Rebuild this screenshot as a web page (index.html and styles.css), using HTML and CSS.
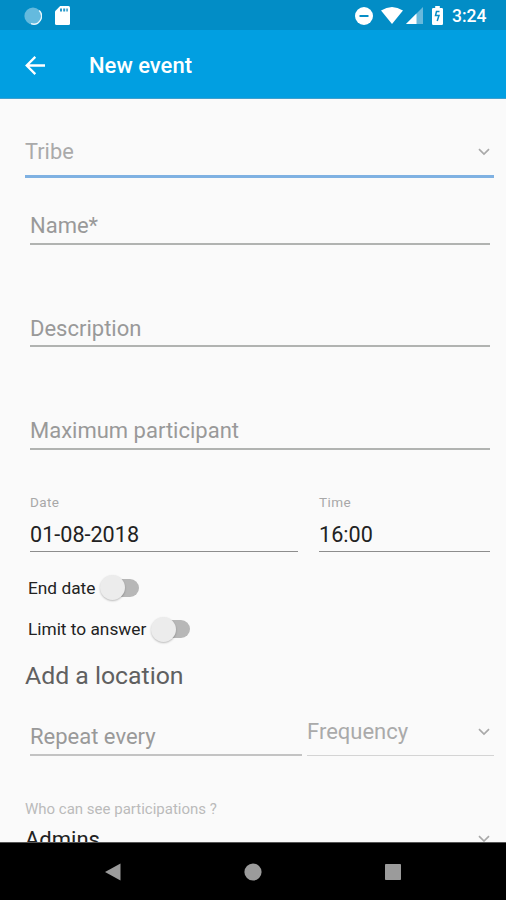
FILE: index.html
```html
<!DOCTYPE html>
<html lang="en">
<head>
<meta charset="utf-8">
<title>New event</title>
<link rel="stylesheet" href="styles.css">
</head>
<body>
<div class="screen">
  <div class="status">
    <svg class="sync" width="18" height="18" viewBox="0 0 18 18"><circle cx="9" cy="9" r="8.6" fill="#64bade"/><path d="M15.200 3.500A8 8 0 0 1 7 16.700" fill="none" stroke="#e9f7fc" stroke-width="1.300"/></svg>
    <svg class="sd" width="15" height="19" viewBox="0 0 15 19"><path d="M5.200 0H13.500Q15 0 15 1.500V17.500Q15 19 13.500 19H1.500Q0 19 0 17.500V5.200Z" fill="#fff"/><path d="M5 2.500H7V5.500H5ZM8.200 2.500H10.200V5.500H8.200ZM11.300 2.500H12.800V5.500H11.300Z" fill="#2698ca"/></svg>
    <span class="spacer"></span>
    <svg class="dnd" width="18" height="18" viewBox="0 0 18 18"><circle cx="9" cy="9" r="9" fill="#fff"/><path d="M4.500 9H13.500" stroke="#078dc6" stroke-width="2"/></svg>
    <svg class="wifi" width="22" height="17" viewBox="0 0 22 17"><path d="M0 3.500Q11 -3.500 22 3.500L11 17Z" fill="#fff"/></svg>
    <svg class="cell" width="17" height="17" viewBox="0 0 17 17"><path d="M0 17L17 0V17Z" fill="#68b9dc"/><path d="M0 17L10.500 6.500V17Z" fill="#fff"/></svg>
    <svg class="battery" width="11" height="19" viewBox="0 0 11 19"><path d="M3.200 0H7.800V2H9.800Q11 2 11 3.200V17.800Q11 19 9.800 19H1.200Q0 19 0 17.800V3.200Q0 2 1.200 2H3.200Z" fill="#fff"/><path d="M7.500 5.500H4.500L3.500 9.500H7L5.200 15" fill="none" stroke="#078dc6" stroke-width="1.500"/></svg>
    <span class="clock">3:24</span>
  </div>
  <div class="appbar">
    <svg width="20" height="20" viewBox="0 0 20 20"><path d="M10.300 .9L1.700 9.500L10.300 18.100M1.700 9.500H20" fill="none" stroke="#fff" stroke-width="2.300"/></svg>
    <h1 class="title">New event</h1>
  </div>
  <div class="form">
    <div class="select tribe"><span class="tribe-text">Tribe</span><svg class="chev" width="12" height="8" viewBox="0 0 12 8"><path d="M1 1.200L6 6L11 1.200" fill="none" stroke="#a9a9a9" stroke-width="1.700"/></svg></div>
    <div class="input name"><span class="name-text">Name*</span></div>
    <div class="input description"><span class="description-text">Description</span></div>
    <div class="input maximum"><span class="maximum-text">Maximum participant</span></div>
    <div class="when">
      <div class="date"><div class="label">Date</div><div class="value"><span class="date-text">01-08-2018</span></div></div>
      <div class="time"><div class="label">Time</div><div class="value"><span class="time-text">16:00</span></div></div>
    </div>
    <div class="toggle"><span class="end-text">End date</span><span class="switch"><span class="thumb"></span></span></div>
    <div class="toggle"><span class="limit-text">Limit to answer</span><span class="switch"><span class="thumb"></span></span></div>
    <div class="location"><span class="location-text">Add a location</span></div>
    <div class="repeat">
      <div class="every"><span class="every-text">Repeat every</span></div>
      <div class="select frequency"><span class="frequency-text">Frequency</span><svg class="chev" width="12" height="8" viewBox="0 0 12 8"><path d="M1 1.200L6 6L11 1.200" fill="none" stroke="#a9a9a9" stroke-width="1.700"/></svg></div>
    </div>
    <div class="who"><span class="who-text">Who can see participations ?</span></div>
    <div class="admins"><span class="admins-text">Admins</span><svg class="chev" width="12" height="8" viewBox="0 0 12 8"><path d="M1 1.200L6 6L11 1.200" fill="none" stroke="#a9a9a9" stroke-width="1.700"/></svg></div>
  </div>
  <div class="nav">
    <svg width="16" height="18" viewBox="0 0 16 18"><path d="M0 9L15.500 .5V17.500Z" fill="#9b9b9b"/></svg>
    <svg class="home" width="18" height="18" viewBox="0 0 18 18"><circle cx="9" cy="9" r="8.600" fill="#9b9b9b"/></svg>
    <svg class="recent" width="16" height="16" viewBox="0 0 16 16"><rect width="16" height="16" rx=".8" fill="#9b9b9b"/></svg>
  </div>
</div>
</body>
</html>
```
FILE: styles.css
```css
* { box-sizing: border-box; }
body { margin: 0; font-family: Roboto, sans-serif; background: #fafafa; }
svg { display: block; flex: none; }
.screen { width: 506px; height: 900px; display: flex; flex-direction: column; overflow: hidden; }
.status { height: 30px; flex: none; display: flex; align-items: center; padding: 1px 17px 0 24px; background: #028dc6; }
.sd { margin-left: 13px; }
.spacer { flex: 1; }
.wifi { margin-left: 8px; }
.cell { margin-left: 3px; }
.battery { margin-left: 9px; }
.clock { width: 37px; margin-left: 9px; font-size: 17.5px; font-weight: 500; line-height: 22px; color: #fff; white-space: nowrap; }
.appbar { height: 69px; flex: none; display: flex; align-items: center; padding: 3px 25px 0; background: #019fe1; border-bottom: 1px solid #3f9fcd; }
.title { margin: 0 0 0 44px; font-size: 22px; line-height: 26px; font-weight: 500; color: #fff; }
.form { flex: 1; min-height: 0; overflow: hidden; padding: 0 12px 0 25px; font-size: 22px; line-height: 26px; color: #999; white-space: nowrap; }
.select { display: flex; justify-content: space-between; align-items: flex-end; color: #aaa; padding-right: 4px; }
.chev { margin-bottom: 9px; }
.tribe { height: 79px; padding-bottom: 10px; border-bottom: 3px solid #7fb1e2; }
.tribe-text { font-size: 21.8px; }
.input { margin: 0 4px 0 5px; display: flex; align-items: flex-end; padding-bottom: 4px; border-bottom: 2px solid #b1b3b1; }
.name { height: 67px; }
.description { height: 102px; padding-bottom: 3px; }
.maximum { height: 103px; }
.when { display: flex; gap: 21px; padding: 0 4px 0 5px; }
.date { width: 268px; }
.time { flex: 1; }
.label { padding-top: 43px; font-size: 13.5px; line-height: 18px; color: #a8a8a8; letter-spacing: .4px; }
.value { height: 41px; display: flex; align-items: flex-end; padding-bottom: 3px; border-bottom: 1px solid #8d8d8d; font-size: 21.6px; color: #222; }
.toggle { height: 42px; display: flex; align-items: center; gap: 5px; padding-left: 3px; font-size: 17.3px; color: #222; }
.when + .toggle { height: 41px; margin-top: 15px; }
.switch { width: 39px; height: 18px; padding-left: 8px; display: flex; align-items: center; background: #b7b7b7; background-clip: content-box; border-radius: 9px; }
.thumb { width: 25px; height: 25px; flex: none; margin-left: -8px; border-radius: 50%; background: #ececec; box-shadow: 0 1px 2px rgba(0,0,0,.25); }
.location { height: 40px; padding-top: 11px; font-size: 24.8px; line-height: 30px; color: #606060; }
.repeat { display: flex; gap: 5px; padding-left: 5px; }
.every { width: 272px; height: 66px; display: flex; align-items: flex-end; padding-bottom: 4px; border-bottom: 2px solid #c3c3c3; }
.frequency { flex: 1; height: 66px; padding-bottom: 10px; border-bottom: 1px solid #d4d4d4; }
.who { padding-top: 43px; font-size: 15px; line-height: 20px; color: #bbb; }
.admins { display: flex; justify-content: space-between; align-items: flex-end; padding: 8px 4px 0 0; color: #222; }
.admins .chev { margin-bottom: 10px; }
.nav { height: 58px; flex: none; background: #000; border-top: 1px solid #555; display: flex; align-items: center; padding-left: 105px; }
.home { margin-left: 123px; }
.recent { margin-left: 123px; }
```
